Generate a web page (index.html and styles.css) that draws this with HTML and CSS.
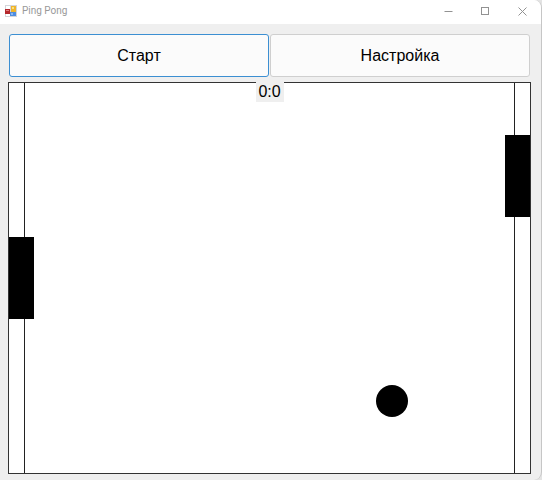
FILE: index.html
```html
<!DOCTYPE html>
<html lang="ru">
<head>
<meta charset="utf-8">
<title>Ping Pong</title>
<link rel="stylesheet" href="styles.css">
</head>
<body>
<div class="window">
  <header class="titlebar">
    <svg class="app-icon" viewBox="0 0 12 12" aria-hidden="true">
      <rect x="0" y="0" width="12" height="12" fill="#d3d5da"/>
      <rect x="1" y="1" width="4" height="3" fill="#fff"/>
      <rect x="0" y="4" width="5" height="5" fill="#b5282c"/>
      <rect x="1" y="5" width="3" height="1" fill="#e08080"/>
      <rect x="1" y="9" width="4" height="2" fill="#fff"/>
      <rect x="6" y="1" width="5" height="6" fill="#efb52b"/>
      <rect x="7" y="2" width="2" height="2" fill="#fbdf80"/>
      <rect x="5" y="7" width="6" height="4" fill="#4f8de0"/>
      <rect x="6" y="8" width="2" height="2" fill="#8bb8f2"/>
    </svg>
    <h1 class="title">Ping Pong</h1>
    <div class="controls">
      <button class="control" aria-label="Свернуть"><svg viewBox="0 0 9 9"><path d="M0.500 4.500H8.500"/></svg></button>
      <button class="control" aria-label="Развернуть"><svg viewBox="0 0 9 9"><rect x="0.500" y="0.500" width="7" height="7"/></svg></button>
      <button class="control" aria-label="Закрыть"><svg viewBox="0 0 9 9"><path d="M0.500 0.500L8.500 8.500M8.500 0.500L0.500 8.500"/></svg></button>
    </div>
  </header>
  <main class="content">
    <div class="toolbar">
      <button class="action focused">Старт</button>
      <button class="action">Настройка</button>
    </div>
    <div class="board">
      <div class="line line-left"></div>
      <div class="line line-right"></div>
      <output class="score">0:0</output>
      <div class="paddle paddle-left"></div>
      <div class="paddle paddle-right"></div>
      <div class="ball"></div>
    </div>
  </main>
</div>
</body>
</html>
```
FILE: styles.css
```css
* {
  box-sizing: border-box;
}

body {
  margin: 0;
  background: #e3e3e3;
  font-family: "Liberation Sans", Arial, sans-serif;
}

.window {
  display: flex;
  flex-direction: column;
  min-height: 100vh;
  overflow: hidden;
  background: #efefef;
  border-right: 1px solid #c6c6c6;
  border-radius: 0 8px 8px 0;
}

.titlebar {
  display: flex;
  align-items: center;
  height: 24px;
  padding: 0 0 2px 5px;
  background: #fff;
}

.app-icon {
  width: 12px;
  height: 12px;
}

.title {
  flex: 1;
  margin: 0 0 0 5px;
  color: #999;
  font: 10px/22px Roboto, sans-serif;
}

.controls {
  display: flex;
}

.control {
  display: flex;
  align-items: center;
  justify-content: center;
  width: 37px;
  height: 22px;
  padding: 0;
  border: 0;
  background: none;
}

.control svg {
  width: 9px;
  height: 9px;
  fill: none;
  stroke: #929292;
}

.content {
  display: flex;
  flex: 1;
  flex-direction: column;
  gap: 5px;
  padding: 10px 10px 6px 8px;
}

.toolbar {
  display: flex;
  gap: 1px;
  padding: 0 1px;
}

.action {
  flex: 1;
  height: 43px;
  padding: 0;
  border: 1px solid #cfcfcf;
  border-radius: 3px;
  background: #fbfbfb;
  color: #000;
  font: 16px/20px "Liberation Sans", Arial, sans-serif;
}

.action.focused {
  border-color: #3c8fd2;
}

.board {
  position: relative;
  flex: 1;
  border: 1px solid #333;
  background: #fff;
}

.line {
  position: absolute;
  top: 0;
  bottom: 0;
  width: 1px;
  background: #222;
}

.line-left {
  left: 15px;
}

.line-right {
  right: 15px;
}

.score {
  position: absolute;
  top: -1px;
  left: 50%;
  width: 28px;
  margin-left: -14px;
  background: #efefef;
  font-size: 16px;
  line-height: 20px;
  text-align: center;
}

.paddle {
  position: absolute;
  width: 25px;
  height: 82px;
  background: #000;
}

.paddle-left {
  top: 154px;
  left: 0;
}

.paddle-right {
  top: 52px;
  right: 0;
}

.ball {
  position: absolute;
  top: 302px;
  left: 367px;
  width: 32px;
  height: 32px;
  border-radius: 50%;
  background: #000;
}
```
